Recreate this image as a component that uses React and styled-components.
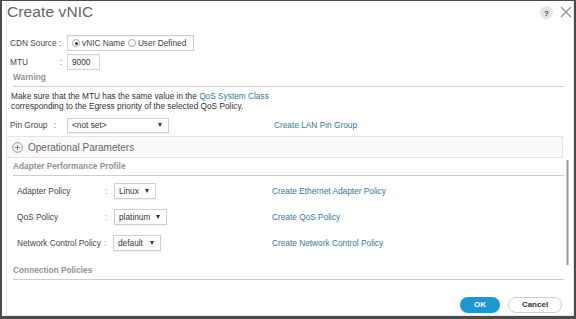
import React from 'react'
import styled, { createGlobalStyle } from 'styled-components'

const Global = createGlobalStyle`
  html, body { margin: 0; padding: 0; background: #fff; }
  body { font-family: "Liberation Sans", Arial, sans-serif; }
  * { box-sizing: border-box; }
`

const HelpIcon = () => (
  <svg width="13" height="13" viewBox="0 0 13 13">
    <circle cx="6.5" cy="6.5" r="6.5" fill="#e4e4e4" />
    <text x="6.5" y="9.5" textAnchor="middle" fontSize="8" fontWeight="bold" fill="#444" fontFamily="Liberation Sans, Arial, sans-serif">?</text>
  </svg>
)

const CloseIcon = () => (
  <svg width="12" height="12" viewBox="0 0 12 12">
    <path d="M1 1 L11 11 M11 1 L1 11" stroke="#8a8a8a" strokeWidth="1.1" fill="none" />
  </svg>
)

const PlusCircle = () => (
  <svg width="11" height="11" viewBox="0 0 11 11">
    <circle cx="5.5" cy="5.5" r="4.8" stroke="#888" strokeWidth="0.9" fill="none" />
    <path d="M5.5 3 V8 M3 5.5 H8" stroke="#777" strokeWidth="0.9" />
  </svg>
)

const CreateVnic = () => {
  return (
    <Window>
      <Global />
      <Panel>
        <Header>
          <Title>Create vNIC</Title>
          <HeaderIcons>
            <HelpIcon />
            <CloseIcon />
          </HeaderIcons>
        </Header>

        <Body>
          <Content>
            <TopRow $mt={10}>
              <TopLabel>CDN Source :</TopLabel>
              <RadioGroup>
                <Radio $checked />
                <RadioText>vNIC Name</RadioText>
                <Radio />
                <RadioText>User Defined</RadioText>
              </RadioGroup>
            </TopRow>

            <TopRow $mt={3}>
              <TopLabel>MTU<Colon $right={5}>:</Colon></TopLabel>
              <Input>9000</Input>
            </TopRow>

            <SectionHead $mt={1} $indent={6}>Warning</SectionHead>

            <Paragraph>
              Make sure that the MTU has the same value in the <Link>QoS System Class</Link>
              <br />
              corresponding to the Egress priority of the selected QoS Policy.
            </Paragraph>

            <TopRow $mt={6}>
              <TopLabel>Pin Group<Colon $right={11}>:</Colon></TopLabel>
              <Select $width={102}>
                <span>&lt;not set&gt;</span>
                <Caret />
              </Select>
              <Link>Create LAN Pin Group</Link>
            </TopRow>

            <Collapse>
              <PlusCircle />
              <span>Operational Parameters</span>
            </Collapse>

            <SectionHead $mt={2} $indent={6}>Adapter Performance Profile</SectionHead>

            <PolicyRow $mt={7}>
              <PolicyLabel>Adapter Policy</PolicyLabel>
              <PolicyColon>:</PolicyColon>
              <div><Select $width={42}><span>Linux</span><Caret /></Select></div>
              <Link>Create Ethernet Adapter Policy</Link>
            </PolicyRow>

            <PolicyRow $mt={10}>
              <PolicyLabel>QoS Policy</PolicyLabel>
              <PolicyColon>:</PolicyColon>
              <div><Select $width={53}><span>platinum</span><Caret /></Select></div>
              <Link>Create QoS Policy</Link>
            </PolicyRow>

            <PolicyRow $mt={10}>
              <PolicyLabel>Network Control Policy</PolicyLabel>
              <PolicyColon $shift={-1}>:</PolicyColon>
              <div><Select $width={48} $shift={-1}><span>default</span><Caret /></Select></div>
              <Link>Create Network Control Policy</Link>
            </PolicyRow>

            <SectionHead $mt={13} $indent={6}>Connection Policies</SectionHead>
          </Content>

          <ScrollTrack>
            <ScrollThumb />
          </ScrollTrack>
        </Body>

        <Footer>
          <PrimaryButton>OK</PrimaryButton>
          <SecondaryButton>Cancel</SecondaryButton>
        </Footer>
      </Panel>
    </Window>
  )
}

export default CreateVnic

const Window = styled.div`
  width: 576px;
  height: 319px;
  border-style: solid;
  border-color: #4b4b4b;
  border-width: 1px 2px 3px 2px;
  background: #fff;
  padding-left: 4px;
  display: flex;
  overflow: hidden;
`

const Panel = styled.div`
  flex: 1;
  display: flex;
  flex-direction: column;
  border-left: 1px solid #e6e6e6;
  border-right: 1px solid #e6e6e6;
  border-bottom: 1px solid #e6e6e6;
  min-width: 0;
`

const Header = styled.div`
  height: 24px;
  display: flex;
  align-items: center;
  justify-content: space-between;
  padding: 0 1px 2px 0;
  flex-shrink: 0;
`

const Title = styled.div`
  font-size: 15.5px;
  color: #666;
  letter-spacing: 0.1px;
`

const HeaderIcons = styled.div`
  display: flex;
  align-items: center;
  gap: 7px;
`

const Body = styled.div`
  height: 270px;
  display: flex;
  overflow: hidden;
  flex-shrink: 0;
`

const Content = styled.div`
  width: 557px;
  display: flex;
  flex-direction: column;
  font-size: 8.3px;
  color: #444;
`

const TopRow = styled.div`
  height: 16px;
  margin-top: ${p => p.$mt}px;
  display: grid;
  grid-template-columns: 57px 207px auto;
  align-items: center;
  padding-left: 3px;
`

const TopLabel = styled.div`
  position: relative;
  white-space: nowrap;
`

const Colon = styled.span`
  position: absolute;
  right: ${p => p.$right}px;
  color: #777;
`

const RadioGroup = styled.div`
  width: 127px;
  height: 16px;
  border: 1px solid #cfcfcf;
  display: flex;
  align-items: center;
  padding-left: 4px;
  box-shadow: inset 0 1px 1px rgba(0, 0, 0, 0.06);
`

const Radio = styled.span`
  width: 8px;
  height: 8px;
  border-radius: 50%;
  border: 1px solid #a8a8a8;
  background: #fff;
  display: inline-flex;
  align-items: center;
  justify-content: center;
  margin-right: 2px;
  &::after {
    content: '';
    width: 3px;
    height: 3px;
    border-radius: 50%;
    background: ${p => (p.$checked ? '#333' : 'transparent')};
  }
`

const RadioText = styled.span`
  margin-right: 3px;
`

const Input = styled.div`
  width: 33px;
  height: 16px;
  border: 1px solid #d4d4d4;
  display: flex;
  align-items: center;
  padding-left: 4px;
  color: #333;
  box-shadow: inset 0 1px 1px rgba(0, 0, 0, 0.05);
`

const SectionHead = styled.div`
  margin-top: ${p => p.$mt}px;
  margin-left: ${p => p.$indent}px;
  height: 16px;
  line-height: 12px;
  font-weight: bold;
  color: #929292;
  border-bottom: 1px solid #cdcdcd;
`

const Paragraph = styled.div`
  margin-top: 4px;
  padding-left: 4px;
  line-height: 10px;
  color: #333;
`

const Link = styled.span`
  color: #35789a;
`

const Select = styled.div`
  width: ${p => p.$width}px;
  height: ${p => (p.$width > 60 ? 15 : 16)}px;
  margin-left: ${p => p.$shift || 0}px;
  border: 1px solid #cfcfcf;
  display: flex;
  align-items: center;
  justify-content: space-between;
  padding: 0 6px 0 4px;
  color: #333;
  box-shadow: 0 1px 1px rgba(0, 0, 0, 0.05);
`

const Caret = styled.span`
  width: 0;
  height: 0;
  border-left: 2.5px solid transparent;
  border-right: 2.5px solid transparent;
  border-top: 4px solid #333;
`

const Collapse = styled.div`
  margin-top: 3px;
  height: 22px;
  width: 557px;
  margin-left: -1px;
  border: 1px solid #e6e3e5;
  background: #fbf9fa;
  display: flex;
  align-items: center;
  gap: 5px;
  padding-left: 5px;
  font-size: 10px;
  color: #666;
`

const PolicyRow = styled.div`
  margin-top: ${p => p.$mt}px;
  height: 16px;
  display: grid;
  grid-template-columns: 88px 9px 158px auto;
  align-items: center;
  padding-left: 10px;
`

const PolicyLabel = styled.div`
  white-space: nowrap;
`

const PolicyColon = styled.div`
  color: #999;
  margin-left: ${p => p.$shift || 0}px;
`

const ScrollTrack = styled.div`
  width: 9px;
  padding-left: 2px;
`

const ScrollThumb = styled.div`
  margin-top: 135px;
  width: 3px;
  height: 105px;
  background: #9a9a9a;
  border-left: 1px solid #c8c8c8;
  border-right: 1px solid #c8c8c8;
`

const Footer = styled.div`
  flex: 1;
  display: flex;
  justify-content: flex-end;
  align-items: center;
  gap: 8px;
  padding: 0 11px 1px 0;
`

const PrimaryButton = styled.button`
  width: 40px;
  height: 16px;
  border-radius: 8px;
  border: none;
  background: #1b98d4;
  color: #fff;
  font-family: "Liberation Sans", Arial, sans-serif;
  font-size: 8px;
  font-weight: bold;
  padding: 0;
`

const SecondaryButton = styled.button`
  width: 54px;
  height: 16px;
  border-radius: 8px;
  border: 1px solid #cfcfcf;
  background: #fff;
  color: #333;
  font-family: "Liberation Sans", Arial, sans-serif;
  font-size: 8px;
  font-weight: bold;
  padding: 0;
`
